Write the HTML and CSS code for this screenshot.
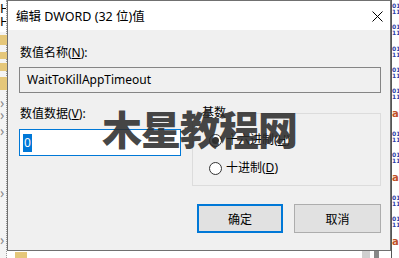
FILE: index.html
```html
<html lang="zh">
<head>
    <title>编辑 DWORD (32 位)值</title>
    <link rel="stylesheet" href="styles.css">
</head>
<body>

<div class="screen">
    <div class="tree">
        <div class="tree-top">H<br/>H</div>
        <div class="folder f1"></div>
        <div class="folder f2"></div>
        <div class="folder f3"></div>
        <div class="folder f4"></div>
        <div class="chev c1">&rsaquo;</div>
        <div class="chev c2">&rsaquo;</div>
        <div class="chev c3">&rsaquo;</div>
        <div class="chev c4">&rsaquo;</div>
        <div class="chev c5">&rsaquo;</div>
    </div>

    <div class="middle">
        <div class="dialog">
            <div class="title-bar">
                <span class="title">编辑 DWORD (32 位)值</span>
                <svg class="close" width="11" height="11" viewBox="0 0 11 11">
                    <path d="M0.5 0.5 L10.5 10.5 M10.5 0.5 L0.5 10.5" stroke="#000" stroke-width="1" fill="none"/>
                </svg>
            </div>
            <div class="dialog-body">
                <div class="label">数值名称(<u>N</u>):</div>
                <div class="textbox readonly">WaitToKillAppTimeout</div>

                <div class="row">
                    <div class="data-col">
                        <div class="label">数值数据(<u>V</u>):</div>
                        <div class="textbox focused"><span class="sel">0</span></div>
                    </div>
                    <fieldset class="group">
                        <legend>基数</legend>
                        <div class="radio-row first">
                            <span class="radio checked"></span>
                            <span>十六进制(<u>H</u>)</span>
                        </div>
                        <div class="radio-row">
                            <span class="radio"></span>
                            <span>十进制(<u>D</u>)</span>
                        </div>
                    </fieldset>
                </div>

                <div class="buttons">
                    <div class="button default">确定</div>
                    <div class="button">取消</div>
                </div>
            </div>
        </div>
        <div class="under">
            <div class="folder-small"></div>
            <div class="scroll-thumb"></div>
        </div>
    </div>

    <div class="values">
        <div class="ico dw">011<br/>110</div>
        <div class="ico dw">011<br/>110</div>
        <div class="ico dw">011<br/>110</div>
        <div class="ico dw">011<br/>110</div>
        <div class="ico dw">011<br/>110</div>
        <div class="ico ab">ab</div>
        <div class="ico dw">011<br/>110</div>
        <div class="ico dw">011<br/>110</div>
        <div class="ico ab">ab</div>
        <div class="ico dw">011<br/>110</div>
        <div class="ico dw">011<br/>110</div>
        <div class="ico ab">ab</div>
        <div class="ico ab">ab</div>
    </div>
</div>

<div class="watermark">木星教程网</div>

</body>
</html>
```

FILE: styles.css
```css
:root {
    --face: #f0f0f0;
    --blue: #0078d7;
    --text: #000;
}

* {
    box-sizing: border-box;
}

html, body {
    margin: 0;
    padding: 0;
    background: #fff;
    font-family: "Noto Sans", "Noto Sans CJK SC", sans-serif;
    font-size: 12px;
    color: var(--text);
}

u {
    text-decoration: underline;
    text-underline-offset: 1px;
}

.screen {
    display: flex;
    width: 399px;
    height: 258px;
    overflow: hidden;
}

/* regedit tree behind the dialog */
.tree {
    position: relative;
    width: 7px;
    flex: none;
    background: #f4f4f4;
    border-right: 1px dotted #9a9a9a;
}

.tree-top {
    height: 32px;
    background: #fff;
    font-size: 13px;
    line-height: 13px;
    padding-top: 2px;
    overflow: hidden;
}

.folder {
    position: absolute;
    left: 0;
    width: 7px;
    background: #e5c77a;
}

.f1 { top: 35px; height: 10px; }
.f2 { top: 52px; height: 7px; }
.f3 { top: 63px; height: 8px; }
.f4 { top: 77px; height: 13px; }

.chev {
    position: absolute;
    left: 0;
    color: #8a8a8a;
    font-size: 14px;
    line-height: 10px;
}

.c1 { top: 98px; }
.c2 { top: 110px; }
.c3 { top: 126px; }
.c4 { top: 188px; }
.c5 { top: 235px; }

.middle {
    width: 384px;
    flex: none;
    display: flex;
    flex-direction: column;
}

/* the dialog */
.dialog {
    height: 251px;
    border: 1px solid #707070;
    background: var(--face);
    display: flex;
    flex-direction: column;
}

.title-bar {
    height: 29px;
    background: #fff;
    display: flex;
    align-items: center;
    justify-content: space-between;
    padding: 0 7px 0 8px;
}

.title {
    font-size: 12.5px;
}

.close {
    margin-top: 1px;
}

.dialog-body {
    flex: 1;
    padding: 15px 9px 0 11px;
}

.label {
    line-height: 16px;
    padding-left: 1px;
}

.textbox {
    height: 26px;
    margin-top: 6px;
    display: flex;
    align-items: center;
    line-height: 18px;
}

.textbox.readonly {
    border: 1px solid #858585;
    background: var(--face);
    padding: 0 7px;
    margin-bottom: 13px;
}

.textbox.focused {
    height: 27px;
    margin-top: 7px;
    border: 1px solid var(--blue);
    background: #fff;
    padding: 0 3px;
}

.sel {
    background: var(--blue);
    color: #fff;
    padding: 0 1px;
}

.row {
    display: flex;
    gap: 11px;
}

.data-col {
    width: 162px;
    flex: none;
}

.group {
    flex: 1;
    height: 80px;
    margin: 0;
    padding: 0 7px;
    border: 1px solid #dcdcdc;
}

.group legend {
    padding: 0 2px;
    line-height: 14px;
}

.radio-row {
    display: flex;
    align-items: center;
    gap: 4px;
    line-height: 16px;
    margin: 12px 0 0 9px;
}

.radio-row.first {
    margin-top: 12px;
}

.radio {
    width: 13px;
    height: 13px;
    border: 1px solid #333;
    border-radius: 50%;
    background: #fff;
    display: flex;
    align-items: center;
    justify-content: center;
}

.radio.checked::after {
    content: "";
    width: 7px;
    height: 7px;
    border-radius: 50%;
    background: #333;
}

.buttons {
    display: flex;
    justify-content: flex-end;
    gap: 11px;
    margin-top: 18px;
}

.button {
    width: 87px;
    height: 29px;
    border: 1px solid #adadad;
    background: #e1e1e1;
    display: flex;
    align-items: center;
    justify-content: center;
}

.button.default {
    width: 86px;
    border: 2px solid var(--blue);
}

/* strip below the dialog */
.under {
    flex: 1;
    position: relative;
    background: #fff;
}

.folder-small {
    position: absolute;
    left: 8px;
    top: 1px;
    width: 12px;
    height: 7px;
    background: #e5c77a;
}

.scroll-thumb {
    position: absolute;
    left: 355px;
    top: 0;
    width: 12px;
    height: 7px;
    background: #d0d0d0;
    border-right: 4px solid #fff;
    box-shadow: 5px 0 0 #888;
}

/* values list on the right */
.values {
    width: 8px;
    flex: none;
    background: #fff;
    border-left: 1px solid #555;
    padding-top: 1px;
}

.ico {
    height: 21.3px;
    font-family: "DejaVu Sans", sans-serif;
    font-weight: bold;
    overflow: hidden;
    white-space: nowrap;
}

.ico.dw {
    color: #2b3fa8;
    font-size: 6px;
    line-height: 6px;
    padding-top: 2px;
}

.ico.ab {
    color: #c0502a;
    font-size: 10px;
    line-height: 14px;
}

/* watermark over the screenshot */
.watermark {
    position: absolute;
    left: 102px;
    top: 104px;
    font-family: "Noto Sans CJK SC", sans-serif;
    font-size: 40px;
    font-weight: 900;
    line-height: 48px;
    letter-spacing: -1px;
    color: rgba(45, 45, 45, 0.88);
}
```
